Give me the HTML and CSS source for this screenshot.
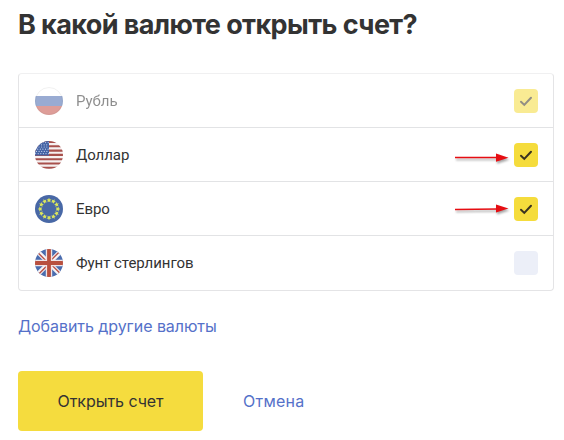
FILE: index.html
```html
<!DOCTYPE html>
<html lang="ru">
<head>
    <meta charset="UTF-8">
    <meta name="viewport" content="width=device-width, initial-scale=1.0">
    <title>Открытие счета</title>
    <link rel="stylesheet" href="styles.css">
</head>
<body>
    <main class="page">
        <h1>В какой валюте открыть счет?</h1>

        <ul class="currencies">
            <li class="currency currency--disabled">
                <svg class="flag" viewBox="0 0 28 28">
                    <clipPath id="round"><circle cx="14" cy="14" r="14"/></clipPath>
                    <g clip-path="url(#round)">
                        <path fill="#fff" d="M0 0h28v10H0z"/>
                        <path fill="#4668ae" d="M0 9h28v10H0z"/>
                        <path fill="#c44e45" d="M0 19h28v9H0z"/>
                    </g>
                    <circle cx="14" cy="14" r="13.5" fill="none" stroke="#000" stroke-opacity=".1"/>
                </svg>
                <span class="name">Рубль</span>
                <span class="check check--on">
                    <svg viewBox="0 0 24 24"><path d="M7 12.7l3.3 3.2L17 8.8"/></svg>
                </span>
            </li>
            <li class="currency">
                <svg class="flag" viewBox="0 0 28 28">
                    <g clip-path="url(#round)">
                        <path fill="#f6f1f1" d="M0 0h28v28H0z"/>
                        <path stroke="#a8504c" stroke-width="2.1" d="M0 1h28M0 5.3h28M0 9.6h28M0 13.9h28M0 18.2h28M0 22.5h28M0 26.8h28"/>
                        <path fill="#4463a5" d="M0 0h14v14.5H0z"/>
                        <path stroke="#c5d2ec" stroke-width="1.2" stroke-linecap="round" stroke-dasharray="0 2.6" d="M8 1.6h6M6.5 3.8h7M4 6h10M2.7 8.2h11M1.5 10.4h12M.6 12.6h13"/>
                    </g>
                </svg>
                <span class="name">Доллар</span>
                <svg class="arrow" viewBox="0 0 54 12">
                    <path d="M0 5.5h43"/>
                    <path class="arrow-head" d="M41 1.5l12.5 4.2L41 9.8z"/>
                </svg>
                <span class="check check--on">
                    <svg viewBox="0 0 24 24"><path d="M7 12.7l3.3 3.2L17 8.8"/></svg>
                </span>
            </li>
            <li class="currency">
                <svg class="flag" viewBox="0 0 28 28">
                    <circle cx="14" cy="14" r="14" fill="#4868a6"/>
                    <defs>
                        <path id="star" fill="#dbe65c" d="M14 2.7l.75 1.5 1.65.2-1.2 1.15.3 1.65-1.5-.8-1.5.8.3-1.65-1.2-1.15 1.65-.2z"/>
                    </defs>
                    <use href="#star"/>
                    <use href="#star" transform="rotate(30 14 14)"/>
                    <use href="#star" transform="rotate(60 14 14)"/>
                    <use href="#star" transform="rotate(90 14 14)"/>
                    <use href="#star" transform="rotate(120 14 14)"/>
                    <use href="#star" transform="rotate(150 14 14)"/>
                    <use href="#star" transform="rotate(180 14 14)"/>
                    <use href="#star" transform="rotate(210 14 14)"/>
                    <use href="#star" transform="rotate(240 14 14)"/>
                    <use href="#star" transform="rotate(270 14 14)"/>
                    <use href="#star" transform="rotate(300 14 14)"/>
                    <use href="#star" transform="rotate(330 14 14)"/>
                </svg>
                <span class="name">Евро</span>
                <svg class="arrow arrow--up" viewBox="0 0 54 12">
                    <path d="M0 6.6l43-.7"/>
                    <path class="arrow-head" d="M41 1.5l12.5 4L41 9.6z"/>
                </svg>
                <span class="check check--on">
                    <svg viewBox="0 0 24 24"><path d="M7 12.7l3.3 3.2L17 8.8"/></svg>
                </span>
            </li>
            <li class="currency">
                <svg class="flag" viewBox="0 0 28 28">
                    <g clip-path="url(#round)">
                        <path fill="#4a6cae" d="M0 0h28v28H0z"/>
                        <path stroke="#f5f2f4" stroke-width="4.6" d="M0 0l28 28M28 0L0 28"/>
                        <path stroke="#b9544b" stroke-width="1.4" d="M0 .8l13 13M28-.8L14 13.2M28 27.2L14 13.2M0 28.8l14-14"/>
                        <path stroke="#f0e4e6" stroke-width="6.4" d="M14 0v28M0 14h28"/>
                        <path stroke="#b9503f" stroke-width="3.8" d="M14 0v28M0 14h28"/>
                    </g>
                </svg>
                <span class="name">Фунт стерлингов</span>
                <span class="check"></span>
            </li>
        </ul>

        <a class="link link--more">Добавить другие валюты</a>

        <div class="actions">
            <button class="button" type="button">Открыть счет</button>
            <a class="link link--cancel">Отмена</a>
        </div>
    </main>
</body>
</html>
```
FILE: styles.css
```css
* {
    margin: 0;
    padding: 0;
    box-sizing: border-box;
}

body {
    background: #fff;
    color: #333;
    font-family: Roboto, 'Liberation Sans', sans-serif;
}

.page {
    width: 554px;
    padding: 7px 0 0 18px;
}

h1 {
    font-family: Inter, 'Liberation Sans', sans-serif;
    font-size: 27px;
    line-height: 36px;
    font-weight: 700;
    letter-spacing: -0.6px;
    white-space: nowrap;
}

.currencies {
    margin-top: 30px;
    border: 1px solid #e4e4e6;
    border-top-color: #f0f0f1;
    border-radius: 4px;
    list-style: none;
}

.currency {
    display: flex;
    align-items: center;
    height: 54px;
    padding: 0 15px 0 16px;
    border-bottom: 1px solid #e2e3e5;
}

.currency:last-child {
    border-bottom: none;
}

.currency--disabled .flag,
.currency--disabled .name,
.currency--disabled .check {
    opacity: 0.55;
}

.flag {
    width: 28px;
    height: 28px;
    margin-right: 13px;
}

.name {
    flex: 1;
    font-size: 15px;
    line-height: 20px;
    letter-spacing: -0.05px;
}

.check {
    width: 24px;
    height: 24px;
    border-radius: 4px;
    background: #eceff8;
}

.check--on {
    background: #f5dc3c;
}

.check svg {
    display: block;
    fill: none;
    stroke: #3a3320;
    stroke-width: 2;
    stroke-linecap: round;
}

.arrow {
    width: 54px;
    height: 12px;
    margin: 6px 5px 0 0;
    overflow: visible;
    fill: none;
    stroke: #e60d12;
    stroke-width: 1.5;
    filter: drop-shadow(1px 2px 1px rgba(0, 0, 0, 0.35));
}

.arrow--up {
    margin-top: 0;
}

.arrow-head {
    fill: #e60d12;
    stroke: none;
}

.link {
    color: #5571c9;
    font-family: Inter, 'Liberation Sans', sans-serif;
    font-size: 16px;
    line-height: 24px;
}

.link--more {
    display: block;
    margin-top: 23px;
    letter-spacing: -0.06px;
}

.link--cancel {
    letter-spacing: 0.25px;
}

.actions {
    display: flex;
    align-items: center;
    gap: 40px;
    margin-top: 33px;
}

.button {
    width: 185px;
    height: 60px;
    border: none;
    border-radius: 4px;
    background: #f5dc3e;
    color: #333;
    font-family: Inter, 'Liberation Sans', sans-serif;
    font-size: 16px;
    letter-spacing: -0.05px;
}
```
